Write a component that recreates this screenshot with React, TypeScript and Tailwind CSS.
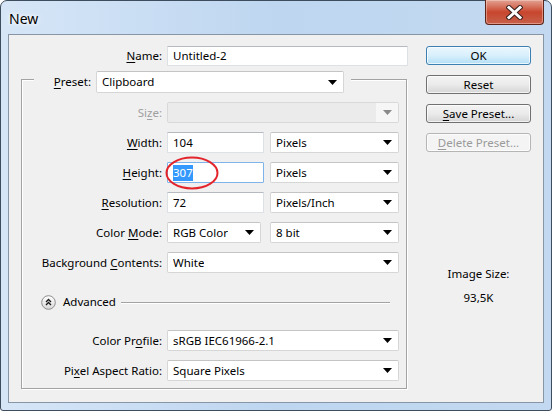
import React from 'react'

function U({ children }: { children: React.ReactNode }) {
  return <span className="underline decoration-1 underline-offset-[2px]">{children}</span>
}

function Arrow({ gray }: { gray?: boolean }) {
  return (
    <svg width="9" height="5" viewBox="0 0 9 5" className="shrink-0">
      <polygon points="0,0 9,0 4.5,5" fill={gray ? '#8a8a8a' : '#000'} />
    </svg>
  )
}

function Select({ value, className }: { value: string; className: string }) {
  return (
    <div
      className={`flex h-[21px] items-center justify-between rounded-[2px] border border-[#d6d6d6] border-t-[#c4c4c4] bg-white pl-[5px] pr-[6px] ${className}`}
    >
      <span className="truncate">{value}</span>
      <Arrow />
    </div>
  )
}

function TextBox({ value, className }: { value: string; className: string }) {
  return (
    <div
      className={`flex h-[20px] items-center rounded-[1px] border border-[#dde1e6] border-t-[#b5b9c0] bg-white pl-[5px] ${className}`}
    >
      {value}
    </div>
  )
}

function Row({ label, children, className }: { label: React.ReactNode; children: React.ReactNode; className?: string }) {
  return (
    <div className={`flex h-[21px] items-center ${className ?? ''}`}>
      <div className="w-[140px] text-right">{label}</div>
      <div className="ml-[5px] flex items-center">{children}</div>
    </div>
  )
}

function Button({ children, kind }: { children: React.ReactNode; kind?: 'default' | 'disabled' }) {
  let look = 'border-[#707070] bg-gradient-to-b from-[#f3f3f3] via-[#ebebeb] to-[#d5d5d5] text-black'
  if (kind === 'default') look = 'border-[#3c7fb1] bg-gradient-to-b from-[#eaf6fd] via-[#d9f0fc] to-[#b3def6] text-black'
  if (kind === 'disabled') look = 'border-[#b5b5b5] bg-[#f4f4f4] text-[#9a9a9a]'
  return (
    <div
      className={`flex h-[19px] w-[105px] items-center justify-center rounded-[3px] border shadow-[inset_0_0_0_1px_rgba(255,255,255,0.7)] ${look}`}
    >
      {children}
    </div>
  )
}

export default function App() {
  return (
    <div className="h-[411px] w-[552px] bg-white font-['Noto_Sans',sans-serif] text-[11.5px] leading-[14px] text-black">
      <div className="flex h-full w-full flex-col rounded-t-[7px] rounded-b-[3px] border border-[#3e4d5e] bg-gradient-to-r from-[#d6e6f7] via-[#bed6f0] to-[#c3d9f1] px-[7px] pb-[7px]">
        {/* Title bar */}
        <div className="flex h-[33px] items-start justify-between">
          <div className="mt-[9px] pl-[1px] text-[14px] leading-[18px] text-black [text-shadow:0_0_6px_#fff,0_0_3px_#fff]">
            New
          </div>
          <div className="-mt-[1px] flex h-[25px] w-[59px] items-center justify-center rounded-b-[4px] border border-t-0 border-[#5e2418] bg-gradient-to-b from-[#e1a293] via-[#c8452d] to-[#c6604a] shadow-[inset_0_0_0_1px_rgba(255,220,210,0.45)]">
            <svg width="17" height="15" viewBox="0 0 17 15">
              <path d="M3 2.5 L14 12.5 M14 2.5 L3 12.5" stroke="#3a2020" strokeWidth="5" strokeLinecap="square" />
              <path d="M3 2.5 L14 12.5 M14 2.5 L3 12.5" stroke="#fff" strokeWidth="3" strokeLinecap="square" />
            </svg>
          </div>
        </div>

        {/* Client area */}
        <div className="flex flex-1 border border-[#8795a5] bg-[#f0f0f0]">
          {/* Left: form */}
          <div className="flex w-[400px] flex-col pl-[12px] pt-[11px]">
            <div className="flex h-[20px] items-center">
              <div className="w-[141px] text-right">
                <U>N</U>ame:
              </div>
              <TextBox value="Untitled-2" className="ml-[5px] w-[241px]" />
            </div>

            <div className="mt-[13px] flex h-[310px] w-[386px] flex-col border border-[#a3a3a3] shadow-[inset_1px_1px_0_#fff,1px_1px_0_#fff]">
              <div className="-mt-[9px] ml-[12px] flex h-[22px] w-[317px] items-center bg-[#f0f0f0]">
                <div className="w-[57px] text-right">
                  <U>P</U>reset:
                </div>
                <Select value="Clipboard" className="ml-[5px] h-[22px] w-[248px]" />
              </div>

              <Row
                className="mt-[9px]"
                label={
                  <span className="text-[#a0a0a0]">
                    Si<U>z</U>e:
                  </span>
                }
              >
                <div className="flex h-[21px] w-[232px] rounded-[2px] border border-[#d9d9d9] bg-[#ebebeb]">
                  <div className="flex-1" />
                  <div className="flex w-[22px] items-center justify-center bg-[#f6f6f6]">
                    <Arrow gray />
                  </div>
                </div>
              </Row>

              <Row
                className="mt-[9px]"
                label={
                  <>
                    <U>W</U>idth:
                  </>
                }
              >
                <TextBox value="104" className="h-[21px] w-[97px]" />
                <Select value="Pixels" className="ml-[6px] w-[129px]" />
              </Row>

              <Row
                className="mt-[9px]"
                label={
                  <>
                    <U>H</U>eight:
                  </>
                }
              >
                <div className="relative">
                  <div className="flex h-[21px] w-[97px] items-center rounded-[1px] border border-[#7eb4ea] bg-white pl-[5px]">
                    <span className="bg-[#3399ff] leading-[16px] text-white">307</span>
                  </div>
                  <svg
                    className="absolute -left-[2px] -top-[6px]"
                    width="54"
                    height="34"
                    viewBox="0 0 54 34"
                  >
                    <ellipse cx="27" cy="17" rx="25.5" ry="15.5" fill="none" stroke="#e3242b" strokeWidth="2" />
                  </svg>
                </div>
                <Select value="Pixels" className="ml-[6px] w-[129px]" />
              </Row>

              <Row
                className="mt-[9px]"
                label={
                  <>
                    <U>R</U>esolution:
                  </>
                }
              >
                <TextBox value="72" className="h-[21px] w-[97px]" />
                <Select value="Pixels/Inch" className="ml-[6px] w-[129px]" />
              </Row>

              <Row
                className="mt-[9px]"
                label={
                  <>
                    Color <U>M</U>ode:
                  </>
                }
              >
                <Select value="RGB Color" className="w-[94px]" />
                <Select value="8 bit" className="ml-[9px] w-[129px]" />
              </Row>

              <Row
                className="mt-[9px]"
                label={
                  <>
                    Background <U>C</U>ontents:
                  </>
                }
              >
                <Select value="White" className="w-[232px]" />
              </Row>

              {/* Advanced */}
              <div className="mt-[19px] flex h-[20px] items-center">
                <svg className="ml-[19px] shrink-0" width="15" height="15" viewBox="0 0 15 15">
                  <defs>
                    <linearGradient id="adv" x1="0" y1="0" x2="0" y2="1">
                      <stop offset="0" stopColor="#ffffff" />
                      <stop offset="1" stopColor="#d8d8d8" />
                    </linearGradient>
                  </defs>
                  <circle cx="7.5" cy="7.5" r="6.8" fill="url(#adv)" stroke="#8c8c8c" strokeWidth="1" />
                  <path d="M5 7 L7.5 4.5 L10 7 M5 10 L7.5 7.5 L10 10" fill="none" stroke="#1a1a1a" strokeWidth="1.3" />
                </svg>
                <span className="ml-[7px]">Advanced</span>
                <div className="ml-[5px] mr-[16px] h-px flex-1 bg-[#a3a3a3] shadow-[0_1px_0_#fff]" />
              </div>

              <Row
                className="mt-[18px]"
                label={
                  <>
                    Color Pr<U>o</U>file:
                  </>
                }
              >
                <Select value="sRGB IEC61966-2.1" className="w-[232px]" />
              </Row>

              <Row
                className="mt-[9px]"
                label={
                  <>
                    Pi<U>x</U>el Aspect Ratio:
                  </>
                }
              >
                <Select value="Square Pixels" className="w-[232px]" />
              </Row>
            </div>
          </div>

          {/* Right: buttons */}
          <div className="ml-[17px] flex w-[105px] flex-col pt-[11px]">
            <div className="flex flex-col gap-[10px]">
              <Button kind="default">OK</Button>
              <Button>Reset</Button>
              <Button>
                <span>
                  <U>S</U>ave Preset...
                </span>
              </Button>
              <Button kind="disabled">
                <span>
                  <U>D</U>elete Preset...
                </span>
              </Button>
            </div>
            <div className="mt-[115px] text-center">Image Size:</div>
            <div className="mt-[10px] text-center">93,5K</div>
          </div>
        </div>
      </div>
    </div>
  )
}
